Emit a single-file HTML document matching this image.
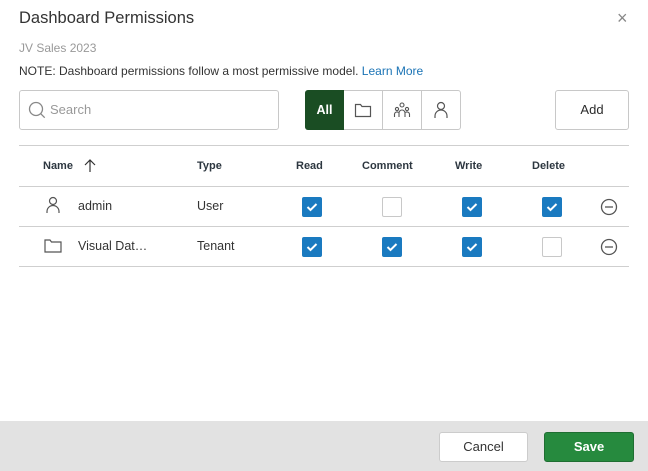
<!DOCTYPE html>
<html><head><style>
*{box-sizing:border-box;margin:0;padding:0}
body{width:648px;height:471px;background:#fff;font-family:"Liberation Sans",sans-serif;color:#2b2b2b;position:relative;overflow:hidden}
.a{position:absolute;white-space:nowrap}
.cb{position:absolute;width:20px;height:20px;border-radius:2px;background:#1a7ac0}
.cb.off{background:#fff;border:1px solid #c8c8c8}
.cb svg{position:absolute;left:3px;top:3px}
.hl{position:absolute;left:19px;width:610px;height:1px;background:#cfcfcf}
.th{font-size:11px;font-weight:bold;color:#2d3740;top:160px}
.td{font-size:12.5px;color:#333}
</style></head><body>
<div class="a" style="left:19px;top:9px;font-size:16.5px;color:#333">Dashboard Permissions</div>
<div class="a" style="left:617px;top:8px;font-size:18px;color:#888">×</div>
<div class="a" style="left:19px;top:41px;font-size:12px;color:#999">JV Sales 2023</div>
<div class="a" style="left:19px;top:64px;font-size:12px;color:#333">NOTE: Dashboard permissions follow a most permissive model. <span style="color:#1a73b5">Learn More</span></div>
<div class="a" style="left:19px;top:90px;width:260px;height:40px;border:1px solid #c8c8c8;border-radius:3px"></div>
<svg class="a" style="left:27px;top:100px" width="20" height="20" viewBox="0 0 20 20"><circle cx="9" cy="9" r="6.5" fill="none" stroke="#888" stroke-width="1.3"/><path d="M13.7 13.7l4 4" stroke="#888" stroke-width="1.3"/></svg>
<div class="a" style="left:50px;top:102px;font-size:13px;color:#999">Search</div>
<div class="a" style="left:305px;top:90px;width:156px;height:40px;border:1px solid #c8c8c8;border-radius:3px"></div>
<div class="a" style="left:305px;top:90px;width:39px;height:40px;background:#1a4d23;border-radius:3px 0 0 3px;color:#fff;font-weight:bold;font-size:12.5px;text-align:center;line-height:40px">All</div>
<div class="a" style="left:382px;top:90px;width:1px;height:40px;background:#c8c8c8"></div>
<div class="a" style="left:421px;top:90px;width:1px;height:40px;background:#c8c8c8"></div>
<svg class="a" style="left:353px;top:100px" width="20" height="20" viewBox="0 0 20 20"><path d="M2.5 4.5h5l1.5 2h8.5v10h-15z" fill="none" stroke="#555" stroke-width="1.2"/></svg>
<svg class="a" style="left:392px;top:100px" width="20" height="20" viewBox="0 0 20 20" fill="none" stroke="#555" stroke-width="1.1"><circle cx="10" cy="5" r="2"/><circle cx="5" cy="9" r="1.6"/><circle cx="15" cy="9" r="1.6"/><path d="M7 17v-4a3 3 0 0 1 6 0v4M2.5 17v-3a2.5 2.5 0 0 1 4 -1.5M17.5 17v-3a2.5 2.5 0 0 0 -4 -1.5"/></svg>
<svg class="a" style="left:431px;top:100px" width="20" height="20" viewBox="0 0 20 20" fill="none" stroke="#555" stroke-width="1.2"><circle cx="10" cy="6" r="3.5"/><path d="M4 18v-2a6 6 0 0 1 12 0v2"/></svg>
<div class="a" style="left:555px;top:90px;width:74px;height:40px;border:1px solid #c8c8c8;border-radius:3px;text-align:center;line-height:38px;font-size:13px">Add</div>
<div class="hl" style="top:145px"></div>
<div class="hl" style="top:186px"></div>
<div class="hl" style="top:226px"></div>
<div class="hl" style="top:266px"></div>
<div class="a th" style="left:43px">Name</div>
<svg class="a" style="left:84px;top:159px" width="12" height="14" viewBox="0 0 12 14"><path d="M6 13V1M1 6l5-5 5 5" fill="none" stroke="#333" stroke-width="1.2"/></svg>
<div class="a th" style="left:197px">Type</div>
<div class="a th" style="left:296px">Read</div>
<div class="a th" style="left:362px">Comment</div>
<div class="a th" style="left:455px">Write</div>
<div class="a th" style="left:532px">Delete</div>
<svg class="a" style="left:43px;top:196px" width="20" height="20" viewBox="0 0 20 20" fill="none" stroke="#555" stroke-width="1.2"><circle cx="10" cy="5" r="3.5"/><path d="M4 17v-1.5a6 6 0 0 1 12 0V17"/></svg>
<div class="a td" style="left:78px;top:199px">admin</div>
<div class="a td" style="left:197px;top:199px">User</div>
<svg class="a" style="left:43px;top:236px" width="20" height="20" viewBox="0 0 20 20"><path d="M2 4h5l1.5 2H18v10H2z" fill="none" stroke="#555" stroke-width="1.2"/></svg>
<div class="a td" style="left:78px;top:239px">Visual Dat…</div>
<div class="a td" style="left:197px;top:239px">Tenant</div>
<div class="cb" style="left:302px;top:197px"><svg width="14" height="14"><path d="M2.5 7l3 3 6-6" fill="none" stroke="#fff" stroke-width="2"/></svg></div>
<div class="cb off" style="left:382px;top:197px"></div>
<div class="cb" style="left:462px;top:197px"><svg width="14" height="14"><path d="M2.5 7l3 3 6-6" fill="none" stroke="#fff" stroke-width="2"/></svg></div>
<div class="cb" style="left:542px;top:197px"><svg width="14" height="14"><path d="M2.5 7l3 3 6-6" fill="none" stroke="#fff" stroke-width="2"/></svg></div>
<div class="cb" style="left:302px;top:237px"><svg width="14" height="14"><path d="M2.5 7l3 3 6-6" fill="none" stroke="#fff" stroke-width="2"/></svg></div>
<div class="cb" style="left:382px;top:237px"><svg width="14" height="14"><path d="M2.5 7l3 3 6-6" fill="none" stroke="#fff" stroke-width="2"/></svg></div>
<div class="cb" style="left:462px;top:237px"><svg width="14" height="14"><path d="M2.5 7l3 3 6-6" fill="none" stroke="#fff" stroke-width="2"/></svg></div>
<div class="cb off" style="left:542px;top:237px"></div>
<svg class="a" style="left:600px;top:198px" width="18" height="18" viewBox="0 0 18 18" fill="none" stroke="#555" stroke-width="1.3"><circle cx="9" cy="9" r="7.5"/><path d="M5 9h8"/></svg>
<svg class="a" style="left:600px;top:238px" width="18" height="18" viewBox="0 0 18 18" fill="none" stroke="#555" stroke-width="1.3"><circle cx="9" cy="9" r="7.5"/><path d="M5 9h8"/></svg>
<div class="a" style="left:0;top:421px;width:648px;height:50px;background:#e2e2e2"></div>
<div class="a" style="left:439px;top:432px;width:89px;height:30px;background:#fff;border:1px solid #ccc;border-radius:3px;text-align:center;line-height:28px;font-size:13px;color:#333">Cancel</div>
<div class="a" style="left:544px;top:432px;width:90px;height:30px;background:#268a3e;border:1px solid #1f6e32;border-radius:3px;text-align:center;line-height:28px;font-size:13px;font-weight:bold;color:#fff">Save</div>
</body></html>
